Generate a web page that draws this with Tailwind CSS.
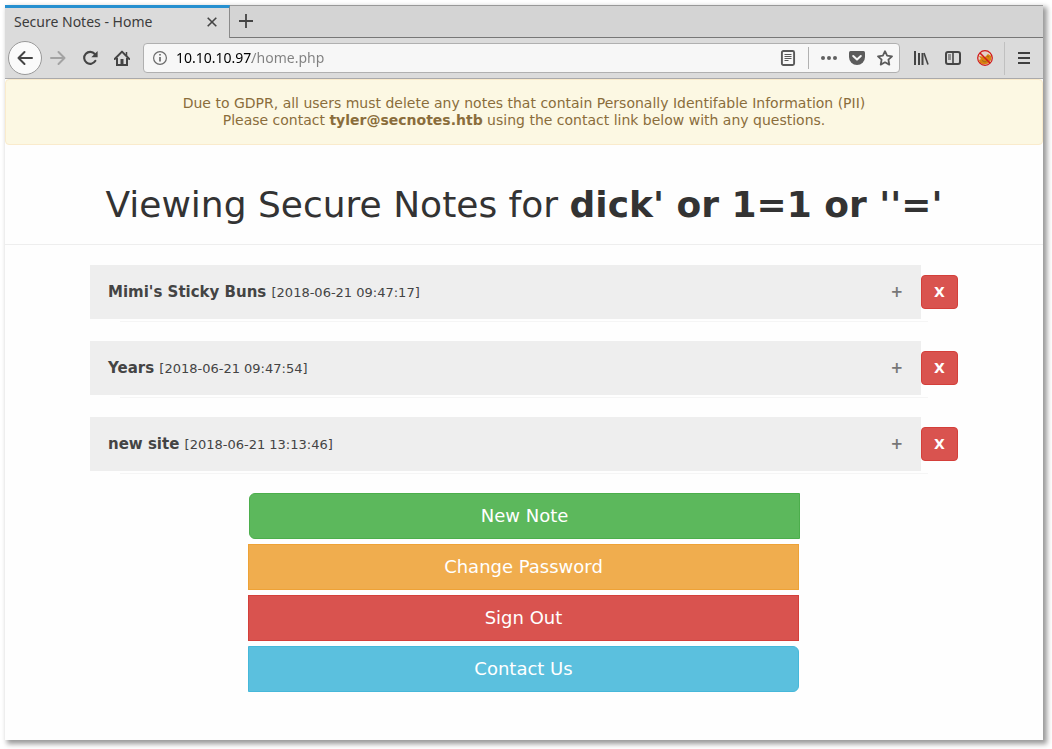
<!DOCTYPE html>
<html lang="en">
<head>
<meta charset="utf-8">
<meta name="viewport" content="width=device-width, initial-scale=1">
<title>Secure Notes - Home</title>
<script src="https://cdn.jsdelivr.net/npm/@tailwindcss/browser@4"></script>
</head>
<body class="flex min-h-screen bg-white pt-[5px] pr-[9px] pb-[9px] pl-[5px] font-['DejaVu_Sans',sans-serif] text-[#333]">
<div class="flex grow flex-col bg-[#fefefe] shadow-[3px_3px_5px_1px_rgba(0,0,0,0.4)]">

  <header class="border-b border-[#a9a9ab] bg-[#dbdbdb] font-['Noto_Sans',sans-serif]">
    <div class="flex h-[33px] bg-[#d4d4d4]">
      <div class="flex w-[225px] items-center justify-between border-t-3 border-r border-t-[#2690d0] border-r-[#8a8a8a] bg-[#dbdbdb] pr-3 pb-[2px] pl-[9px]">
        <span class="text-sm text-[#3c3c3c]">Secure Notes - Home</span>
        <button aria-label="Close tab"><svg class="size-[10px]" viewBox="0 0 10 10" fill="none" stroke="#444" stroke-width="1.6"><path d="M.7.7l8.6 8.6M9.3.7L.7 9.3"/></svg></button>
      </div>
      <div class="flex grow items-center border-t border-b border-t-[#999] border-b-[#777] pb-[2px] pl-[9px]">
        <button aria-label="New tab"><svg class="size-[14px]" viewBox="0 0 14 14" fill="none" stroke="#444" stroke-width="1.8"><path d="M7 0v14M0 7h14"/></svg></button>
      </div>
    </div>
    <div class="flex h-10 items-center">
      <button aria-label="Back" class="ml-[3px] flex size-[34px] items-center justify-center rounded-full border border-[#999] bg-[#fafafa]"><svg class="size-4" viewBox="0 0 16 16" fill="none" stroke="#444" stroke-width="2" stroke-linecap="round" stroke-linejoin="round"><path d="M15 8H1.5M7.5 2l-6 6 6 6"/></svg></button>
      <button aria-label="Forward" class="ml-2"><svg class="size-4" viewBox="0 0 16 16" fill="none" stroke="#a3a3a3" stroke-width="2" stroke-linecap="round" stroke-linejoin="round"><path d="M1 8h13.5M8.500 2l6 6-6 6"/></svg></button>
      <button aria-label="Reload" class="ml-4"><svg class="size-4" viewBox="0 0 16 16"><path d="M12.800 4A6 6 0 1 0 13.400 10.800" fill="none" stroke="#444" stroke-width="2.100" stroke-linecap="round"/><path d="M15.600 1v6.300H9.300z" fill="#444"/></svg></button>
      <button aria-label="Home" class="ml-4"><svg class="size-4" viewBox="0 0 16 16" fill="none" stroke="#444" stroke-width="2"><path d="M.7 9L8 1.600 15.300 9" stroke-linecap="round" stroke-linejoin="round"/><path d="M3 8v7h10V8"/><path d="M8 9v6" stroke-width="3"/><path d="M12.500 2v4" stroke-width="1.500"/></svg></button>
      <div class="ml-[13px] flex h-[30px] grow items-center rounded border border-[#b0b0b0] bg-[#f7f7f7] pr-[6px] pl-[9px]">
        <svg class="size-[14px] shrink-0" viewBox="0 0 14 14" fill="none" stroke="#6b6b6b"><circle cx="7" cy="7" r="6.400" stroke-width="1.200"/><path d="M7 6v4.500M7 3v1.600" stroke-width="1.700"/></svg>
        <input aria-label="Address" value="10.10.10.97/home.php" class="ml-[9px] min-w-0 grow bg-linear-to-r from-black from-[76px] to-[#808080] to-[76px] bg-clip-text text-sm text-transparent outline-none">
        <button aria-label="Reader view"><svg class="size-4" viewBox="0 0 16 16" fill="none" stroke="#585858"><rect x="1.900" y="1" width="12.200" height="14" rx="1.500" stroke-width="1.900"/><path d="M4.500 4.500h7M4.500 6.500h7M4.500 8.500h7M4.500 10.500h4"/></svg></button>
        <span class="ml-3 h-[22px] w-px bg-[#b1b1b1]"></span>
        <button aria-label="Page actions" class="ml-3"><svg class="size-4" viewBox="0 0 16 16" fill="#606060"><circle cx="2" cy="8" r="2"/><circle cx="8" cy="8" r="2"/><circle cx="14" cy="8" r="2"/></svg></button>
        <button aria-label="Save to Pocket" class="ml-3"><svg class="size-4" viewBox="0 0 16 16"><path d="M1.500 1h13Q16 1 16 2.500V7A8 8 0 0 1 0 7V2.500Q0 1 1.500 1z" fill="#5c5c5c"/><path d="M4.200 6L8 9.600 11.800 6" fill="none" stroke="#f7f7f7" stroke-width="2" stroke-linecap="round" stroke-linejoin="round"/></svg></button>
        <button aria-label="Bookmark this page" class="ml-3"><svg class="size-4" viewBox="0 0 16 16" fill="none" stroke="#5c5c5c" stroke-width="1.800" stroke-linejoin="round"><path d="M8 1.200l2.100 4.400 4.900.7-3.600 3.400.9 4.900L8 12.300l-4.300 2.300.9-4.900L1 6.300l4.900-.7z"/></svg></button>
      </div>
      <button aria-label="Library" class="ml-[13px]"><svg class="size-4" viewBox="0 0 16 16" fill="none" stroke="#454545" stroke-width="2"><path d="M2 1v14M6 3v12M9.500 3v12" /><path d="M11 3l4 11.500" stroke-width="1.600"/></svg></button>
      <button aria-label="Sidebars" class="ml-4"><svg class="size-4" viewBox="0 0 16 16" fill="none" stroke="#454545"><rect x="1" y="2" width="14" height="12" rx="2" stroke-width="2"/><path d="M8 2v12" stroke-width="1.600"/><path d="M3 5h3M3 7h3M3 9h3"/></svg></button>
      <button aria-label="FoxyProxy" class="ml-4"><svg class="size-4" viewBox="0 0 16 16"><circle cx="8" cy="8" r="7.300" fill="#e5cfc8"/><path d="M2 6l3 .5 2.500 1L11 4l1.500 1L14.500 6l-.5 4-3 3.500-4 1-4-1.500L2 10l2-1z" fill="#d9820f"/><path d="M5 10.500l3 1.500 3-2M10 6l2 1" stroke="#a06a1d" fill="none"/><circle cx="8" cy="8" r="7.300" fill="none" stroke="#d01818" stroke-width="1.200"/><path d="M3 3l10 10" stroke="#d01818" stroke-width="1.500"/></svg></button>
      <span class="ml-[11px] h-[33px] w-px bg-[#c0c0c0]"></span>
      <button aria-label="Menu" class="mr-[11px] ml-[11px]"><svg class="size-4" viewBox="0 0 16 16" fill="none" stroke="#3f3f3f" stroke-width="2"><path d="M2 3h12M2 8h12M2 13h12"/></svg></button>
    </div>
  </header>

  <main>
    <div role="alert" class="rounded border border-[#faebcc] bg-[#fcf8e3] px-4 py-[15px] text-center text-sm/[17px] text-[#8a6d3b]">
      <p>Due to GDPR, all users must delete any notes that contain Personally Identifable Information (PII)</p>
      <p>Please contact <b>tyler@secnotes.htb</b> using the contact link below with any questions.</p>
    </div>
    <div class="border-b border-[#eee] pt-10 pb-[19px] text-center">
      <h1 class="text-4xl/[40px]">Viewing Secure Notes for <b>dick' or 1=1 or ''='</b></h1>
    </div>

    <section aria-label="Notes" class="mt-5 px-[85px] text-[#444]">
      <article class="mb-[19px]">
        <div class="flex items-center">
          <button class="flex h-[54px] grow items-center justify-between bg-[#eee] px-[18px] text-left"><span class="text-[13px]"><b class="text-[15px]">Mimi's Sticky Buns </b>[2018-06-21 09:47:17]</span><b class="text-[15px] text-[#777]">+</b></button>
          <button aria-label="Delete Mimi's Sticky Buns" class="h-[34px] w-[37px] rounded border border-[#d43f3a] bg-[#d9534f] text-sm font-bold text-white">X</button>
        </div>
        <hr class="mt-[2px] mr-[30px] ml-[30px] border-[#f5f5f5]">
      </article>
      <article class="mb-[19px]">
        <div class="flex items-center">
          <button class="flex h-[54px] grow items-center justify-between bg-[#eee] px-[18px] text-left"><span class="text-[13px]"><b class="text-[15px]">Years </b>[2018-06-21 09:47:54]</span><b class="text-[15px] text-[#777]">+</b></button>
          <button aria-label="Delete Years" class="h-[34px] w-[37px] rounded border border-[#d43f3a] bg-[#d9534f] text-sm font-bold text-white">X</button>
        </div>
        <hr class="mt-[2px] mr-[30px] ml-[30px] border-[#f5f5f5]">
      </article>
      <article class="mb-[19px]">
        <div class="flex items-center">
          <button class="flex h-[54px] grow items-center justify-between bg-[#eee] px-[18px] text-left"><span class="text-[13px]"><b class="text-[15px]">new site </b>[2018-06-21 13:13:46]</span><b class="text-[15px] text-[#777]">+</b></button>
          <button aria-label="Delete new site" class="h-[34px] w-[37px] rounded border border-[#d43f3a] bg-[#d9534f] text-sm font-bold text-white">X</button>
        </div>
        <hr class="mt-[2px] mr-[30px] ml-[30px] border-[#f5f5f5]">
      </article>
    </section>

    <nav aria-label="Account" class="mx-auto flex w-full max-w-[552px] flex-col gap-[5px] text-center text-lg/[24px] text-white">
      <a href="#" class="ml-px rounded-l-md border border-[#4cae4c] bg-[#5cb85c] py-[10px]">New Note</a>
      <a href="#" class="mr-px border border-[#eea236] bg-[#f0ad4e] py-[10px]">Change Password</a>
      <a href="#" class="mr-px border border-[#d43f3a] bg-[#d9534f] py-[10px]">Sign Out</a>
      <a href="#" class="mr-px rounded-r-md border border-[#46b8da] bg-[#5bc0de] py-[10px]">Contact Us</a>
    </nav>
  </main>
</div>
</body>
</html>
